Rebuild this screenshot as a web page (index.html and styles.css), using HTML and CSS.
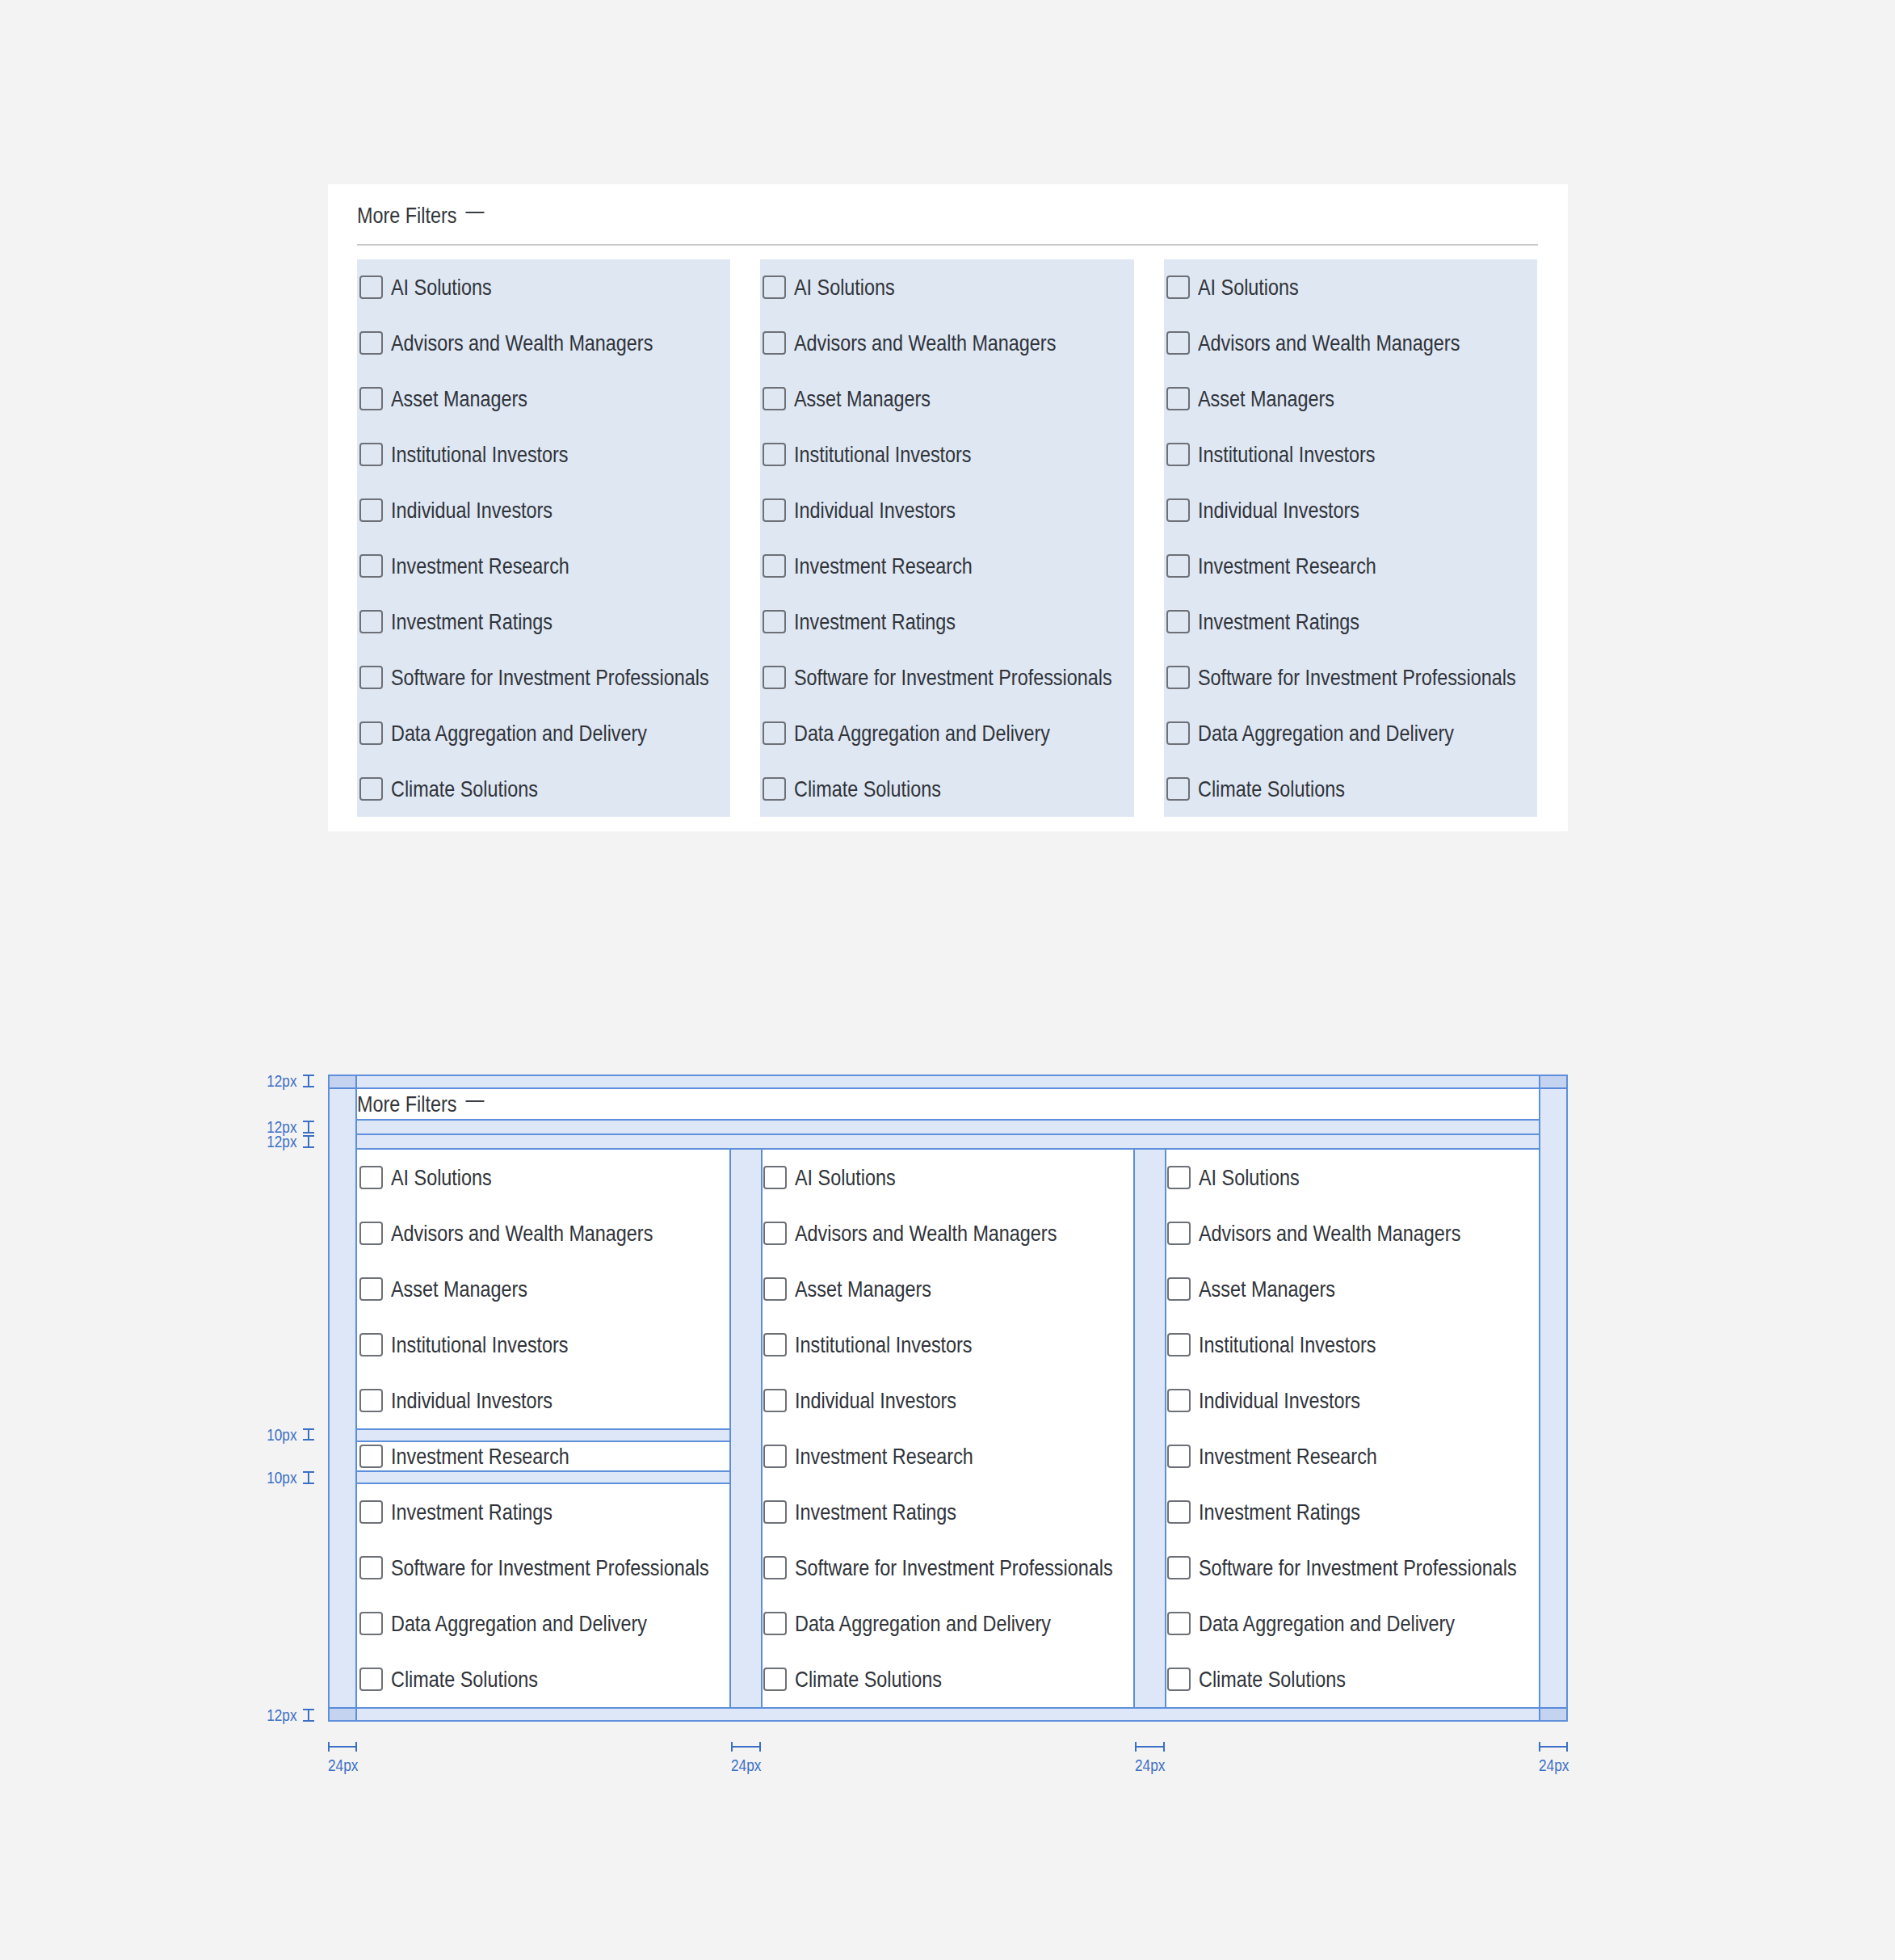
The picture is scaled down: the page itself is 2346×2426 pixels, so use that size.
FILE: index.html
```html
<!DOCTYPE html>
<html lang="en">
<head>
    <meta charset="UTF-8">
    <meta name="viewport" content="width=device-width, initial-scale=1.0">
    <title>More Filters</title>
    <link rel="stylesheet" href="styles.css">
</head>
<body>
    <div class="page">
        <!-- Filter panel -->
        <section class="filters">
            <div class="filters-head">
                <span class="narrow">More Filters<span class="filters-toggle"></span></span>
            </div>
            <hr class="filters-rule">
            <div class="filters-grid">
                <div class="filters-col">
                    <div class="option"><label class="option-label"><input type="checkbox"><span class="narrow">AI Solutions</span></label></div>
                    <div class="option"><label class="option-label"><input type="checkbox"><span class="narrow">Advisors and Wealth Managers</span></label></div>
                    <div class="option"><label class="option-label"><input type="checkbox"><span class="narrow">Asset Managers</span></label></div>
                    <div class="option"><label class="option-label"><input type="checkbox"><span class="narrow">Institutional Investors</span></label></div>
                    <div class="option"><label class="option-label"><input type="checkbox"><span class="narrow">Individual Investors</span></label></div>
                    <div class="option"><label class="option-label"><input type="checkbox"><span class="narrow">Investment Research</span></label></div>
                    <div class="option"><label class="option-label"><input type="checkbox"><span class="narrow">Investment Ratings</span></label></div>
                    <div class="option"><label class="option-label"><input type="checkbox"><span class="narrow">Software for Investment Professionals</span></label></div>
                    <div class="option"><label class="option-label"><input type="checkbox"><span class="narrow">Data Aggregation and Delivery</span></label></div>
                    <div class="option"><label class="option-label"><input type="checkbox"><span class="narrow">Climate Solutions</span></label></div>
                </div>
                <div class="filters-col">
                    <div class="option"><label class="option-label"><input type="checkbox"><span class="narrow">AI Solutions</span></label></div>
                    <div class="option"><label class="option-label"><input type="checkbox"><span class="narrow">Advisors and Wealth Managers</span></label></div>
                    <div class="option"><label class="option-label"><input type="checkbox"><span class="narrow">Asset Managers</span></label></div>
                    <div class="option"><label class="option-label"><input type="checkbox"><span class="narrow">Institutional Investors</span></label></div>
                    <div class="option"><label class="option-label"><input type="checkbox"><span class="narrow">Individual Investors</span></label></div>
                    <div class="option"><label class="option-label"><input type="checkbox"><span class="narrow">Investment Research</span></label></div>
                    <div class="option"><label class="option-label"><input type="checkbox"><span class="narrow">Investment Ratings</span></label></div>
                    <div class="option"><label class="option-label"><input type="checkbox"><span class="narrow">Software for Investment Professionals</span></label></div>
                    <div class="option"><label class="option-label"><input type="checkbox"><span class="narrow">Data Aggregation and Delivery</span></label></div>
                    <div class="option"><label class="option-label"><input type="checkbox"><span class="narrow">Climate Solutions</span></label></div>
                </div>
                <div class="filters-col">
                    <div class="option"><label class="option-label"><input type="checkbox"><span class="narrow">AI Solutions</span></label></div>
                    <div class="option"><label class="option-label"><input type="checkbox"><span class="narrow">Advisors and Wealth Managers</span></label></div>
                    <div class="option"><label class="option-label"><input type="checkbox"><span class="narrow">Asset Managers</span></label></div>
                    <div class="option"><label class="option-label"><input type="checkbox"><span class="narrow">Institutional Investors</span></label></div>
                    <div class="option"><label class="option-label"><input type="checkbox"><span class="narrow">Individual Investors</span></label></div>
                    <div class="option"><label class="option-label"><input type="checkbox"><span class="narrow">Investment Research</span></label></div>
                    <div class="option"><label class="option-label"><input type="checkbox"><span class="narrow">Investment Ratings</span></label></div>
                    <div class="option"><label class="option-label"><input type="checkbox"><span class="narrow">Software for Investment Professionals</span></label></div>
                    <div class="option"><label class="option-label"><input type="checkbox"><span class="narrow">Data Aggregation and Delivery</span></label></div>
                    <div class="option"><label class="option-label"><input type="checkbox"><span class="narrow">Climate Solutions</span></label></div>
                </div>
            </div>
        </section>

        <!-- Same panel with spacing guides -->
        <section class="spec">
            <span class="pad pad-top"><span class="note note-v note-outer"><span class="note-text">12px</span><span class="beam-v"></span></span></span>
            <span class="pad pad-bottom"><span class="note note-v note-outer"><span class="note-text">12px</span><span class="beam-v"></span></span></span>
            <span class="pad pad-left"></span>
            <span class="pad pad-right"></span>

            <div class="filters-head spec-head">
                <span class="narrow">More Filters<span class="filters-toggle"></span></span>
            </div>
            <div class="spec-band"><span class="note note-v"><span class="note-text">12px</span><span class="beam-v"></span></span></div>
            <div class="spec-band"><span class="note note-v"><span class="note-text">12px</span><span class="beam-v"></span></span></div>

            <div class="filters-grid spec-grid">
                <div class="spec-col">
                    <div class="option"><label class="option-label"><input type="checkbox"><span class="narrow">AI Solutions</span></label></div>
                    <div class="option"><label class="option-label"><input type="checkbox"><span class="narrow">Advisors and Wealth Managers</span></label></div>
                    <div class="option"><label class="option-label"><input type="checkbox"><span class="narrow">Asset Managers</span></label></div>
                    <div class="option"><label class="option-label"><input type="checkbox"><span class="narrow">Institutional Investors</span></label></div>
                    <div class="option"><label class="option-label"><input type="checkbox"><span class="narrow">Individual Investors</span></label></div>
                    <div class="option option-measured">
                        <span class="note note-v note-row-top"><span class="note-text">10px</span><span class="beam-v"></span></span>
                        <label class="option-label"><input type="checkbox"><span class="narrow">Investment Research</span></label>
                        <span class="note note-v note-row-bottom"><span class="note-text">10px</span><span class="beam-v"></span></span>
                    </div>
                    <div class="option"><label class="option-label"><input type="checkbox"><span class="narrow">Investment Ratings</span></label></div>
                    <div class="option"><label class="option-label"><input type="checkbox"><span class="narrow">Software for Investment Professionals</span></label></div>
                    <div class="option"><label class="option-label"><input type="checkbox"><span class="narrow">Data Aggregation and Delivery</span></label></div>
                    <div class="option"><label class="option-label"><input type="checkbox"><span class="narrow">Climate Solutions</span></label></div>
                </div>
                <div class="spec-col">
                    <div class="option"><label class="option-label"><input type="checkbox"><span class="narrow">AI Solutions</span></label></div>
                    <div class="option"><label class="option-label"><input type="checkbox"><span class="narrow">Advisors and Wealth Managers</span></label></div>
                    <div class="option"><label class="option-label"><input type="checkbox"><span class="narrow">Asset Managers</span></label></div>
                    <div class="option"><label class="option-label"><input type="checkbox"><span class="narrow">Institutional Investors</span></label></div>
                    <div class="option"><label class="option-label"><input type="checkbox"><span class="narrow">Individual Investors</span></label></div>
                    <div class="option"><label class="option-label"><input type="checkbox"><span class="narrow">Investment Research</span></label></div>
                    <div class="option"><label class="option-label"><input type="checkbox"><span class="narrow">Investment Ratings</span></label></div>
                    <div class="option"><label class="option-label"><input type="checkbox"><span class="narrow">Software for Investment Professionals</span></label></div>
                    <div class="option"><label class="option-label"><input type="checkbox"><span class="narrow">Data Aggregation and Delivery</span></label></div>
                    <div class="option"><label class="option-label"><input type="checkbox"><span class="narrow">Climate Solutions</span></label></div>
                </div>
                <div class="spec-col">
                    <div class="option"><label class="option-label"><input type="checkbox"><span class="narrow">AI Solutions</span></label></div>
                    <div class="option"><label class="option-label"><input type="checkbox"><span class="narrow">Advisors and Wealth Managers</span></label></div>
                    <div class="option"><label class="option-label"><input type="checkbox"><span class="narrow">Asset Managers</span></label></div>
                    <div class="option"><label class="option-label"><input type="checkbox"><span class="narrow">Institutional Investors</span></label></div>
                    <div class="option"><label class="option-label"><input type="checkbox"><span class="narrow">Individual Investors</span></label></div>
                    <div class="option"><label class="option-label"><input type="checkbox"><span class="narrow">Investment Research</span></label></div>
                    <div class="option"><label class="option-label"><input type="checkbox"><span class="narrow">Investment Ratings</span></label></div>
                    <div class="option"><label class="option-label"><input type="checkbox"><span class="narrow">Software for Investment Professionals</span></label></div>
                    <div class="option"><label class="option-label"><input type="checkbox"><span class="narrow">Data Aggregation and Delivery</span></label></div>
                    <div class="option"><label class="option-label"><input type="checkbox"><span class="narrow">Climate Solutions</span></label></div>
                </div>
            </div>
        </section>

        <!-- Horizontal spacing marks under the guides -->
        <div class="scale">
            <div class="scale-mark"><span class="beam-h"></span><span class="note-text">24px</span></div>
            <div></div>
            <div class="scale-mark"><span class="beam-h"></span><span class="note-text">24px</span></div>
            <div></div>
            <div class="scale-mark"><span class="beam-h"></span><span class="note-text">24px</span></div>
            <div></div>
            <div class="scale-mark"><span class="beam-h"></span><span class="note-text">24px</span></div>
        </div>
    </div>
</body>
</html>
```

FILE: styles.css
```css
:root {
    --line: #5d8fdb;
    --band: rgba(70, 124, 210, 0.18);
    --note: #3b6fc5;
}

body {
    margin: 0;
    background-color: #f3f3f3;
    font-family: "Liberation Sans", Arial, sans-serif;
    color: #30343a;
}

.page {
    width: 1535px;
    margin: 0 auto;
    padding: 228px 0 200px;
}

/* condensed face: squeeze the sans horizontally */
.narrow {
    display: inline-block;
    transform: scaleX(0.82);
    transform-origin: 0 50%;
    white-space: nowrap;
}

/* panel */

.filters {
    background: #fff;
    padding: 19px 37px 18px 36px;
}

.filters-head {
    display: flex;
    align-items: center;
    height: 38px;
    font-size: 28.5px;
    line-height: 38px;
    color: #33363b;
}

.filters-toggle {
    display: inline-block;
    width: 28px;
    height: 2px;
    margin-left: 14px;
    vertical-align: 12px;
    background: #3a3d42;
}

.filters-rule {
    height: 2px;
    margin: 17px 0;
    border: 0;
    background: #cbcbcb;
}

.filters-grid {
    display: grid;
    grid-template-columns: repeat(3, minmax(0, 1fr));
    column-gap: 37px;
}

.filters-col {
    background: #dfe7f3;
}

.option {
    position: relative;
    padding: 15px 0;
}

.option-label {
    display: flex;
    align-items: center;
    gap: 10px;
    height: 39px;
    padding-left: 3px;
    box-sizing: border-box;
    font-size: 28.5px;
    line-height: 39px;
    white-space: nowrap;
}

.option-label input {
    appearance: none;
    flex: none;
    width: 29px;
    height: 29px;
    margin: 0;
    border: 2px solid #6d7177;
    border-radius: 4px;
    background: transparent;
}

/* spacing guides */

.spec {
    position: relative;
    margin-top: 301px;
    padding: 16px 34px;
    background: #fff;
    border: 2px solid var(--line);
}

.pad {
    position: absolute;
    background: var(--band);
}

.pad-top {
    top: 0;
    left: 0;
    right: 0;
    height: 14px;
    border-bottom: 2px solid var(--line);
}

.pad-bottom {
    bottom: 0;
    left: 0;
    right: 0;
    height: 14px;
    border-top: 2px solid var(--line);
}

.pad-left {
    top: 0;
    bottom: 0;
    left: 0;
    width: 32px;
    border-right: 2px solid var(--line);
}

.pad-right {
    top: 0;
    bottom: 0;
    right: 0;
    width: 32px;
    border-left: 2px solid var(--line);
}

.spec-head {
    height: 37px;
    border-bottom: 2px solid var(--line);
    line-height: 37px;
}

.spec-band {
    position: relative;
    height: 16px;
    background: var(--band);
    border-bottom: 2px solid var(--line);
}

.spec-grid {
    background: var(--band);
}

.spec-col {
    background: #fff;
}

.spec-col + .spec-col {
    border-left: 2px solid var(--line);
}

.spec-col:not(:last-child) {
    border-right: 2px solid var(--line);
}

.spec-col .option-label {
    padding-left: 1px;
}

.spec-col:first-child .option-label {
    padding-left: 3px;
}

.option-measured {
    background: var(--band);
    box-shadow: inset 0 2px 0 var(--line), inset 0 -2px 0 var(--line);
}

.option-measured .option-label {
    background: #fff;
    border-top: 2px solid var(--line);
    border-bottom: 2px solid var(--line);
}

/* notes */

.note {
    position: absolute;
    display: flex;
    align-items: center;
    gap: 7px;
}

.note-v {
    top: 0;
    bottom: 0;
    right: calc(100% + 53px);
}

.pad .note-outer {
    top: -2px;
    bottom: -2px;
    right: calc(100% + 19px);
}

.pad-top .note-outer {
    bottom: 0;
}

.pad-bottom .note-outer {
    top: 0;
}

.note-row-top {
    top: 0;
    bottom: auto;
    height: 15px;
}

.note-row-bottom {
    top: auto;
    bottom: 0;
    height: 16px;
}

.note-text {
    display: inline-block;
    font-size: 21px;
    line-height: 22px;
    color: var(--note);
    transform: scaleX(0.82);
    white-space: nowrap;
}

.note-v .note-text {
    transform-origin: 100% 50%;
}

.beam-v {
    position: relative;
    align-self: stretch;
    flex: none;
    width: 14px;
    box-sizing: border-box;
    border-top: 2px solid var(--note);
    border-bottom: 2px solid var(--note);
}

.beam-v::before {
    content: "";
    position: absolute;
    top: 0;
    bottom: 0;
    left: 6px;
    width: 2px;
    background: var(--note);
}

.scale {
    display: grid;
    grid-template-columns: 36px minmax(0, 1fr) 37px minmax(0, 1fr) 37px minmax(0, 1fr) 36px;
    margin-top: 25px;
}

.scale-mark {
    display: flex;
    flex-direction: column;
    align-items: flex-start;
    gap: 6px;
}

.scale-mark .note-text {
    transform-origin: 0 50%;
}

.beam-h {
    position: relative;
    width: 100%;
    height: 12px;
    box-sizing: border-box;
    border-left: 2px solid var(--note);
    border-right: 2px solid var(--note);
}

.beam-h::before {
    content: "";
    position: absolute;
    left: 0;
    right: 0;
    top: 5px;
    height: 2px;
    background: var(--note);
}
```
